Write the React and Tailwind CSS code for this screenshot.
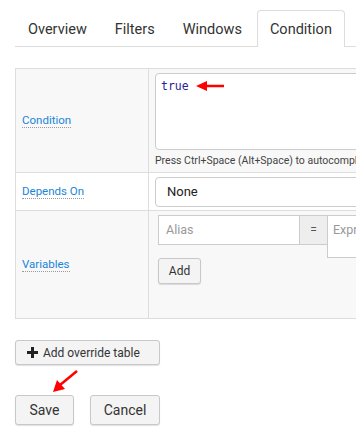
import React from 'react';

const btn =
  'rounded-[3px] border border-[#c8c8c8] bg-[#f4f4f4] text-[#333] shadow-[0_1px_1px_rgba(0,0,0,0.12)]';

function Label({ children }) {
  return (
    <span className="border-b border-dotted border-[#9a9a9a] text-[11.5px] leading-[14px] text-[#1a85d8]">
      {children}
    </span>
  );
}

function Tabs() {
  const tabs = ['Overview', 'Filters', 'Windows', 'Condition', 'Settings'];
  return (
    <ul className="flex border-b border-[#ddd] pt-[10px]">
      {tabs.map((t) => {
        const active = t === 'Condition';
        return (
          <li
            key={t}
            className={
              active
                ? 'mr-[2px] -mb-px h-[37px] rounded-t-[4px] border border-b-0 border-[#ddd] bg-white px-[12px] pt-[8px] text-[14.5px] text-[#333]'
                : t === 'Settings'
                ? 'mr-[2px] h-[36px] px-[13px] pt-[9px] text-[14.5px] text-[#ccc]'
                : 'mr-[2px] h-[36px] px-[13px] pt-[9px] text-[14.5px] text-[#333]'
            }
          >
            {t}
          </li>
        );
      })}
    </ul>
  );
}

export default function App() {
  return (
    <div
      className="relative h-[438px] w-[356px] overflow-hidden bg-white"
      style={{ fontFamily: 'Roboto, "Noto Sans", sans-serif' }}
    >
      <div className="w-[460px] pl-[15px]">
        <Tabs />

        <div className="mt-[21px] grid grid-cols-[133px_1fr] border border-[#ddd]">
          {/* Condition row */}
          <div className="flex h-[103px] items-center border-r border-[#ddd] bg-[#f8f8f8] pl-[6px]">
            <Label>Condition</Label>
          </div>
          <div className="h-[103px] bg-[#f8f8f8] pl-[6px] pt-[4px]">
            <div className="h-[77px] rounded-[4px] border border-[#ccc] bg-white pl-[5px] pt-[4px] font-['DejaVu_Sans_Mono',monospace] text-[11.5px] text-[#2a1e94]">
              true
            </div>
            <p className="mt-[3px] whitespace-nowrap text-[10.5px] text-[#444]">
              Press Ctrl+Space (Alt+Space) to autocomplete
            </p>
          </div>

          {/* Depends On row */}
          <div className="flex h-[38px] items-center border-r border-t border-[#ddd] bg-white pl-[6px]">
            <Label>Depends On</Label>
          </div>
          <div className="h-[38px] border-t border-[#ddd] bg-white pl-[6px] pt-[4px]">
            <div className="flex h-[30px] items-center rounded-[4px] border border-[#ccc] pl-[11px] text-[13px] text-[#222]">
              None
            </div>
          </div>

          {/* Variables row */}
          <div className="flex h-[108px] items-center border-r border-t border-[#ddd] bg-[#f8f8f8] pl-[6px]">
            <Label>Variables</Label>
          </div>
          <div className="h-[108px] border-t border-[#ddd] bg-[#f8f8f8] pl-[9px] pt-[4px]">
            <div className="flex items-start">
              <div className="flex h-[30px] w-[142px] items-center border border-[#ccc] bg-white pl-[7px] text-[12.5px] text-[#999]">
                Alias
              </div>
              <div className="flex h-[30px] w-[27px] items-center justify-center border-y border-[#ccc] bg-[#eee] text-[12px] text-[#555]">
                =
              </div>
              <div className="h-[43px] w-[120px] border border-[#ccc] bg-white pl-[5px] pt-[5px] text-[12.5px] text-[#999]">
                Expression
              </div>
            </div>
            <button type="button" className={`${btn} -mt-[6px] h-[26px] w-[43px] text-[12px]`}>
              Add
            </button>
          </div>
        </div>

        <button
          type="button"
          className={`${btn} mt-[21px] flex h-[25px] w-[145px] items-center gap-[5px] pl-[11px] text-[12px]`}
        >
          <svg width="11" height="11" viewBox="0 0 11 11">
            <path d="M4 0h3v4h4v3H7v4H4V7H0V4h4z" fill="#222" />
          </svg>
          Add override table
        </button>

        <div className="mt-[30px] flex gap-[16px]">
          <button type="button" className={`${btn} h-[30px] w-[59px] text-[14px]`}>
            Save
          </button>
          <button type="button" className={`${btn} h-[30px] w-[70px] text-[14px]`}>
            Cancel
          </button>
        </div>
      </div>

      {/* red annotation arrows */}
      <svg className="absolute left-[194px] top-[80px]" width="32" height="12" viewBox="0 0 32 12">
        <path d="M30 6H10" stroke="#f00" strokeWidth="2.5" />
        <path d="M2 6l11-5v10z" fill="#f00" />
      </svg>
      <svg className="absolute left-[50px] top-[369px]" width="30" height="26" viewBox="0 0 30 26">
        <path d="M27 2L10 16" stroke="#f00" strokeWidth="2.5" />
        <path d="M3 23l4-12 8 9z" fill="#f00" />
      </svg>
    </div>
  );
}
